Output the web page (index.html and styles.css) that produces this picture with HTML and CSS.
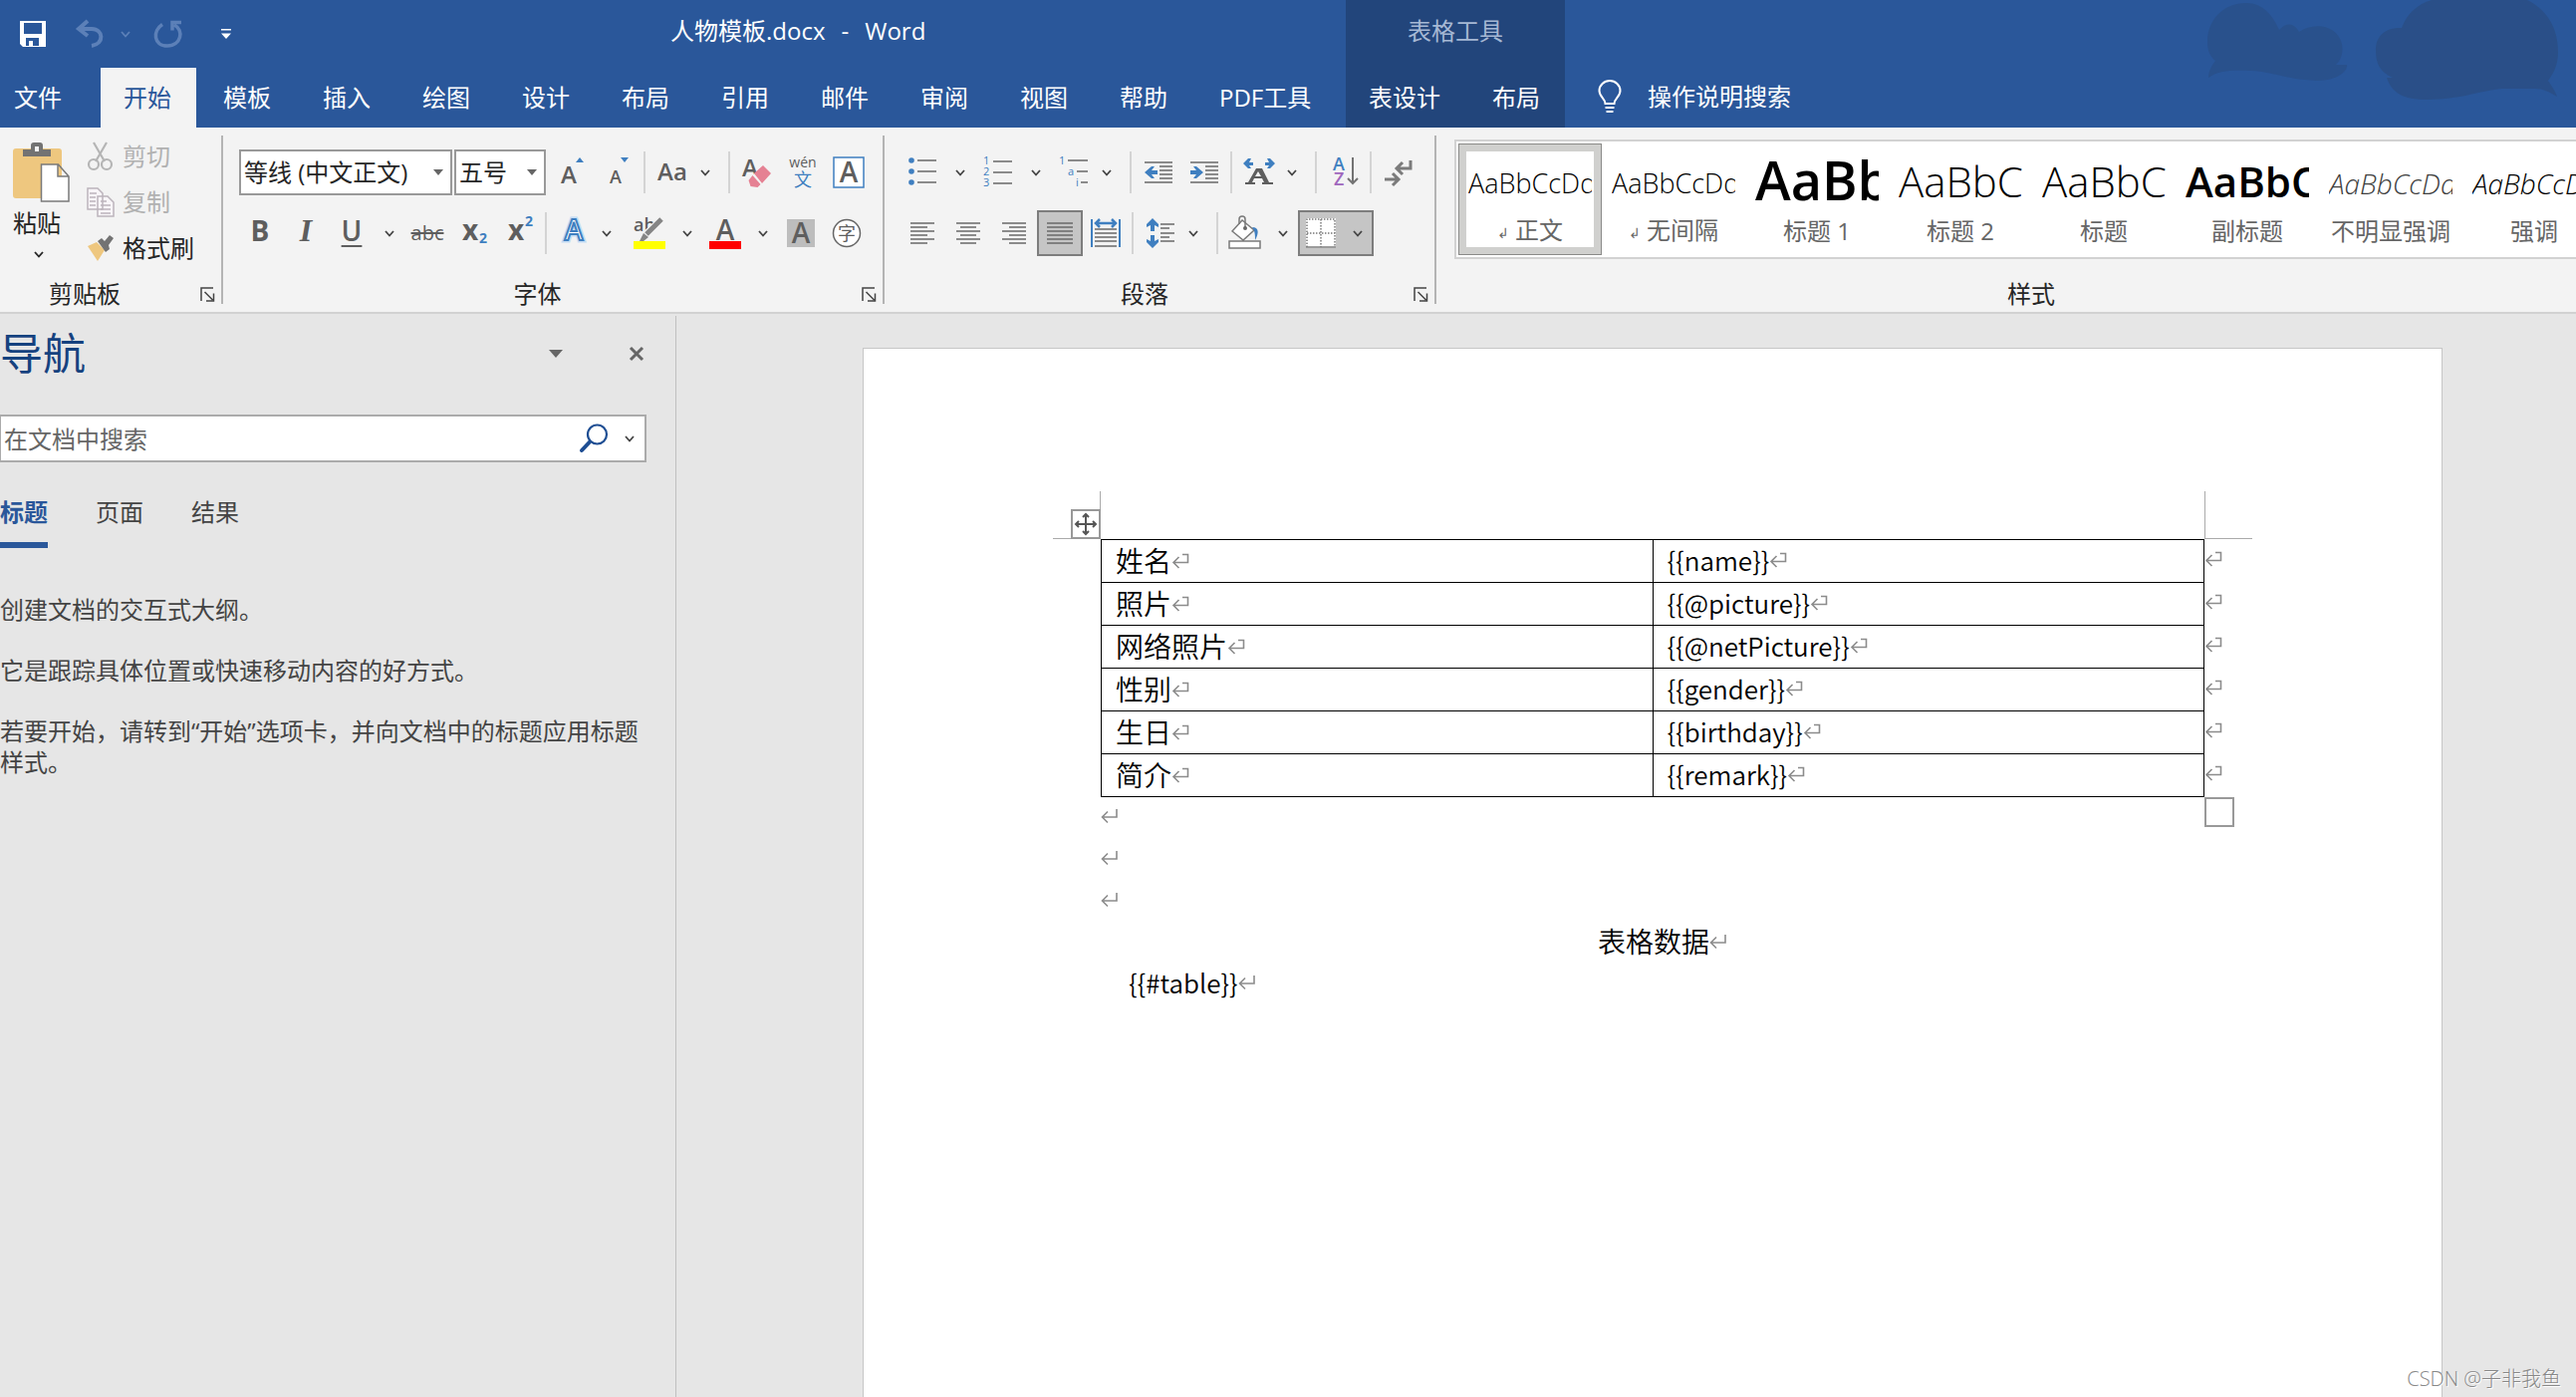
FILE: index.html
```html
<!DOCTYPE html>
<html lang="zh-CN">
<head>
<meta charset="utf-8">
<title>人物模板.docx - Word</title>
<link rel="stylesheet" href="styles.css">
</head>
<body>
<svg class="defs" aria-hidden="true">
  <symbol id="chev" viewBox="0 0 10 7"><path d="M1 1l4 4.500 4-4.500" fill="none" stroke="currentColor" stroke-width="1.800"/></symbol>
  <symbol id="tri" viewBox="0 0 10 6"><path d="M0 0h10l-5 6z" fill="currentColor"/></symbol>
  <symbol id="ret" viewBox="0 0 18 16"><path d="M11 1.500h5.500V9.500H2M7.500 4L2 9.500 7.500 15" fill="none" stroke="#8c8c8c" stroke-width="1.600"/></symbol>
  <symbol id="para" viewBox="0 0 18 16"><path d="M16 1v8H2M7 3.500L1.500 9 7 14.500" fill="none" stroke="#8c8c8c" stroke-width="1.600"/></symbol>
  <symbol id="launch" viewBox="0 0 15 15"><path d="M1 14V1h12M4.500 5l8 8M13.500 6.500v7.500h-7.500" fill="none" stroke="#444" stroke-width="1.500"/></symbol>
</svg>

<header class="top">
  <svg class="deco" width="420" height="128" viewBox="0 0 420 128" aria-hidden="true">
    <g fill="#2a4f86">
      <path opacity=".7" d="M50 42C50 20 66 3 89 3c17 0 27 13 33 27 8-8 15-7 20 2 14-10 38-8 43 12 2 12-3 18-6 21l11 0c1 6-9 16-30 16-30-1-40-8-65-10-21-1-35 0-44 7 0-6 3-12 7-17-5-4-8-10-8-19z"/>
      <path opacity=".9" d="M219 50c0-14 10-23 26-22 5-14 16-24 30-28h96c20 10 31 28 31 52 0 14-5 22-10 29 3 4 8 12 9 16-8-5-14-8-22-8h-34c-30 4-38 10-74 11-25 0-36-7-41-22l6 0c-13-6-17-14-17-28z"/>
    </g>
  </svg>
  <div class="titlebar">
    <div class="qat">
      <button class="q" aria-label="保存"><svg width="26" height="26" viewBox="0 0 26 26"><path fill="#fff" fill-rule="evenodd" d="M0 0h26v26H3l-3-3zM4 2v11h18V2zM6 17v8h3v-5h4v5h6v-8z"/></svg></button>
      <button class="q dim wide" aria-label="撤消"><svg width="28" height="28" viewBox="0 0 28 28"><path fill="none" stroke="currentColor" stroke-width="4" d="M12 1L3 9l9 7M3 9h13c12 0 13 15 0 17"/></svg><svg width="10" height="7"><use href="#chev"/></svg></button>
      <button class="q dim redo" aria-label="恢复"><svg width="28" height="28" viewBox="0 0 28 28"><path fill="none" stroke="currentColor" stroke-width="3.500" d="M8 4.500C-2 11-1 26 13 26s17-16 7-21M27 2.500h-9v8"/></svg></button>
      <button class="q more" aria-label="自定义快速访问工具栏"><svg width="10" height="10" viewBox="0 0 10 10"><path fill="#fff" d="M0 0h10v1.500H0zM0 4.500h10L5 10z"/></svg></button>
    </div>
    <h1 class="doc-title"><span>人物模板.docx</span><span>-</span><span>Word</span></h1>
  </div>
  <nav class="tabs">
    <a class="tab file" href="#">文件</a>
    <a class="tab active" href="#">开始</a>
    <a class="tab" href="#">模板</a>
    <a class="tab" href="#">插入</a>
    <a class="tab" href="#">绘图</a>
    <a class="tab" href="#">设计</a>
    <a class="tab" href="#">布局</a>
    <a class="tab" href="#">引用</a>
    <a class="tab" href="#">邮件</a>
    <a class="tab" href="#">审阅</a>
    <a class="tab" href="#">视图</a>
    <a class="tab" href="#">帮助</a>
    <a class="tab pdf" href="#">PDF工具</a>
    <div class="context">
      <span class="context-name">表格工具</span>
      <a class="tab" href="#">表设计</a>
      <a class="tab" href="#">布局</a>
    </div>
    <a class="tell" href="#"><svg width="24" height="34" viewBox="0 0 24 34"><path fill="none" stroke="#fff" stroke-width="2" d="M7.500 24c0-5-6-7-6-13a10.500 10 0 0 1 21 0c0 6-6 8-6 13zM7.500 28h9"/><path fill="#fff" d="M8.500 31h7v2h-7z"/></svg>操作说明搜索</a>
  </nav>
</header>

<section class="ribbon">
  <div class="group clip">
    <div class="clip-body">
      <button class="paste">
        <svg width="58" height="62" viewBox="0 0 58 62"><rect y="7" width="49" height="50" rx="3" fill="#eec77f"/><path fill="#737373" d="M10 15V8h8V4q0-3 3-3h6q3 0 3 3v4h8v7z"/><path fill="#f3f3f3" d="M22 5h4v5h-4z"/><path fill="#fff" stroke="#7a7a7a" stroke-width="1.500" d="M28.500 23h17L56 35v25H28.500zM45 23v12h11"/></svg>
        <span>粘贴</span>
        <svg width="10" height="7"><use href="#chev"/></svg>
      </button>
      <div class="clip-list">
        <button class="off"><svg width="28" height="30" viewBox="0 0 28 30"><g fill="none" stroke="#b5b5b5" stroke-width="2.200"><path d="M7 1l11 19M20 1L9 20"/><circle cx="7" cy="23" r="5"/><circle cx="20" cy="23" r="5"/></g></svg>剪切</button>
        <button class="off"><svg width="28" height="30" viewBox="0 0 28 30"><path fill="#f8f5f8" stroke="#bcb4bc" stroke-width="1.500" d="M1 1h10l5 5v16H1zM11 9h10l6 6v14H11z"/><path stroke="#bcb4bc" stroke-width="1.300" d="M3 6h7M3 10h6M3 14h6M3 18h6M14 14h6M14 18h10M14 22h10M14 26h10"/></svg>复制</button>
        <button><svg width="28" height="26" viewBox="0 0 28 26"><path fill="#eec77f" d="M1 11l9-4 8 8-7 11z"/><path fill="#737373" d="M11 6l4-3 3 3 5-6 4 3-5 7 1 4-4 3z"/></svg>格式刷</button>
      </div>
    </div>
    <div class="foot"><span class="foot-name">剪贴板</span><button class="launch" aria-label="剪贴板设置"><svg width="15" height="15"><use href="#launch"/></svg></button></div>
  </div>

  <div class="group font">
    <div class="row">
      <span class="combo family"><select aria-label="字体"><option>等线 (中文正文)</option></select><svg width="10" height="6"><use href="#tri"/></svg></span>
      <span class="combo size"><select aria-label="字号"><option>五号</option></select><svg width="10" height="6"><use href="#tri"/></svg></span>
      <button class="tool" aria-label="增大字号"><svg width="26" height="32" viewBox="0 0 26 32"><text x="2" y="27" class="t24">A</text><path fill="#3f7fc0" d="M17 6l4-5 4 5z"/></svg></button>
      <button class="tool" aria-label="减小字号"><svg width="26" height="32" viewBox="0 0 26 32"><text x="5" y="27" class="t18">A</text><path fill="#3f7fc0" d="M16 1h8l-4 5z"/></svg></button>
      <i class="sep"></i>
      <button class="tool t-aa">Aa</button><button class="drop near" aria-label="更改大小写"><svg width="10" height="7"><use href="#chev"/></svg></button>
      <i class="sep"></i>
      <button class="tool" aria-label="清除格式"><svg width="30" height="32" viewBox="0 0 30 32"><text x="0" y="20" class="t24">A</text><path fill="#f3f3f3" d="M6 24L22 7l8 8-14 17z"/><path fill="#e58193" d="M12 17l9-8 8 8-9 10zM10.500 19l8 9-3 3-7-1-2-6z"/></svg></button>
      <button class="tool" aria-label="拼音指南"><svg width="32" height="34" viewBox="0 0 32 34"><text x="16" y="12" text-anchor="middle" class="t14">wén</text><text x="16" y="31" text-anchor="middle" class="t18 blue thin">文</text></svg></button>
      <button class="tool" aria-label="字符边框"><svg width="32" height="32" viewBox="0 0 32 32"><rect x="1" y="1" width="30" height="30" fill="#fff" stroke="#3f7fc0" stroke-width="1.500"/><text x="16" y="26" text-anchor="middle" class="t28">A</text></svg></button>
    </div>
    <div class="row">
      <button class="tool t-b">B</button>
      <button class="tool t-i">I</button>
      <button class="tool t-u">U</button><button class="drop" aria-label="下划线样式"><svg width="10" height="7"><use href="#chev"/></svg></button>
      <button class="tool t-s">abc</button>
      <button class="tool" aria-label="下标"><svg width="28" height="34" viewBox="0 0 28 34"><text x="3" y="24" class="t28 bold">x</text><text x="20" y="27" class="t14 bold blue">2</text></svg></button>
      <button class="tool" aria-label="上标"><svg width="28" height="34" viewBox="0 0 28 34"><text x="3" y="24" class="t28 bold">x</text><text x="20" y="10" class="t14 bold blue">2</text></svg></button>
      <i class="sep"></i>
      <button class="tool" aria-label="文本效果"><svg width="28" height="36" viewBox="0 0 28 36"><text x="14" y="25" text-anchor="middle" class="t28 halo">A</text><text x="14" y="25" text-anchor="middle" class="t28 glow" aria-hidden="true">A</text></svg></button><button class="drop near" aria-label="文本效果选项"><svg width="10" height="7"><use href="#chev"/></svg></button>
      <button class="tool" aria-label="突出显示"><svg width="34" height="34" viewBox="0 0 34 34"><text x="1" y="15" class="t18">ab</text><path stroke="#f3f3f3" stroke-width="8" d="M12 20L29 4"/><path stroke="#858585" stroke-width="5" d="M14 18L29 3"/><path fill="#858585" d="M11 17l5 4-5 4H7z"/><path fill="#ff0" d="M1 25h32v8H1z"/></svg></button><button class="drop" aria-label="突出显示颜色"><svg width="10" height="7"><use href="#chev"/></svg></button>
      <button class="tool" aria-label="字体颜色"><svg width="34" height="34" viewBox="0 0 34 34"><text x="17" y="24" text-anchor="middle" class="t28">A</text><path fill="red" d="M1 25h32v8H1z"/></svg></button><button class="drop" aria-label="字体颜色选项"><svg width="10" height="7"><use href="#chev"/></svg></button>
      <button class="tool" aria-label="字符底纹"><svg width="28" height="28" viewBox="0 0 28 28"><path fill="#bdbdbd" d="M0 0h28v28H0z"/><text x="14" y="24" text-anchor="middle" class="t28">A</text></svg></button>
      <button class="tool" aria-label="带圈字符"><svg width="30" height="30" viewBox="0 0 30 30"><circle cx="15" cy="15" r="13.500" fill="#fff" stroke="#666" stroke-width="1.500"/><text x="15" y="22" text-anchor="middle" class="t18 thin">字</text></svg></button>
    </div>
    <div class="foot"><span class="foot-name">字体</span><button class="launch" aria-label="字体设置"><svg width="15" height="15"><use href="#launch"/></svg></button></div>
  </div>

  <div class="group paragraph">
    <div class="row">
      <button class="tool" aria-label="项目符号"><svg width="30" height="30" viewBox="0 0 30 30"><g fill="#3f7fc0"><circle cx="4" cy="3" r="2.800"/><circle cx="4" cy="14" r="2.800"/><circle cx="4" cy="25" r="2.800"/></g><path class="ln" d="M10 3h19M10 14h19M10 25h19"/></svg></button><button class="drop" aria-label="项目符号库"><svg width="10" height="7"><use href="#chev"/></svg></button>
      <button class="tool" aria-label="编号"><svg width="30" height="34" viewBox="0 0 30 34"><text x="0" y="9" class="t11 blue">1</text><text x="0" y="20" class="t11 blue">2</text><text x="0" y="31" class="t11 blue">3</text><path class="ln" d="M10 6h19M10 17h19M10 28h19"/></svg></button><button class="drop" aria-label="编号库"><svg width="10" height="7"><use href="#chev"/></svg></button>
      <button class="tool" aria-label="多级列表"><svg width="30" height="34" viewBox="0 0 30 34"><text x="0" y="9" class="t11 blue">1</text><text x="9" y="20" class="t11 blue">a</text><text x="17" y="31" class="t11 blue">i</text><path class="ln" d="M9 5h20M18 16h11M22 27h7"/></svg></button><button class="drop near" aria-label="多级列表库"><svg width="10" height="7"><use href="#chev"/></svg></button>
      <i class="sep"></i>
      <button class="tool" aria-label="减少缩进量"><svg width="30" height="22" viewBox="0 0 30 22"><path class="ln" d="M1 1h28M16 5h13M16 9h13M16 13h13M16 17h13M1 21h28"/><path fill="#3f7fc0" d="M1 11l7-6h3l-3 4h6v4H8l3 4H8z"/></svg></button>
      <button class="tool" aria-label="增加缩进量"><svg width="30" height="22" viewBox="0 0 30 22"><path class="ln" d="M1 1h28M16 5h13M16 9h13M16 13h13M16 17h13M1 21h28"/><path fill="#3f7fc0" d="M14 11L7 5H4l3 4H1v4h6l-3 4h3z"/></svg></button>
      <i class="sep"></i>
      <button class="tool" aria-label="中文版式"><svg width="32" height="28" viewBox="0 0 32 28"><path fill="#3f7fc0" d="M0 5l5-5h3L6 4h4v3H6l2 3H5zM32 5l-5-5h-3l2 4h-4v3h4l-2 3h3z"/><path fill="#5e5e5e" fill-rule="evenodd" d="M13 10h6l7 14h4v2H19v-2h2l-2-4h-8l-2 4h3v2H2v-2h3zM15 13l-3 5h6z"/></svg></button><button class="drop near" aria-label="中文版式选项"><svg width="10" height="7"><use href="#chev"/></svg></button>
      <i class="sep"></i>
      <button class="tool" aria-label="排序"><svg width="26" height="34" viewBox="0 0 26 34"><text x="2" y="15" class="t18 blue">A</text><text x="3" y="30" class="t18 purple">Z</text><path fill="none" stroke="#737373" stroke-width="2" d="M22 2v26M17 23l5 5 5-5"/></svg></button>
      <i class="sep"></i>
      <button class="tool" aria-label="显示编辑标记"><svg width="30" height="28" viewBox="0 0 30 28"><path fill="none" stroke="#7b7b7b" stroke-width="3" d="M27 2v8H14M19 4l-6 6 6 6M1 21h13M9 15l6 6-6 6"/></svg></button>
    </div>
    <div class="row">
      <button class="tool" aria-label="左对齐"><svg width="26" height="24" viewBox="0 0 26 24"><path class="ln" d="M1 2h24M1 6h17M1 10h24M1 14h17M1 18h24M1 22h17"/></svg></button>
      <button class="tool" aria-label="居中"><svg width="26" height="24" viewBox="0 0 26 24"><path class="ln" d="M1 2h24M5 6h16M1 10h24M5 14h16M1 18h24M5 22h16"/></svg></button>
      <button class="tool" aria-label="右对齐"><svg width="26" height="24" viewBox="0 0 26 24"><path class="ln" d="M1 2h24M8 6h17M1 10h24M8 14h17M1 18h24M8 22h17"/></svg></button>
      <button class="tool on" aria-label="两端对齐"><svg width="26" height="24" viewBox="0 0 26 24"><path class="ln" d="M0 2h26M0 6h26M0 10h26M0 14h26M0 18h26M0 22h26"/></svg></button>
      <button class="tool" aria-label="分散对齐"><svg width="30" height="30" viewBox="0 0 30 30"><path class="ln" d="M4 11h22M4 15h22M4 19h22M4 23h22M4 28h22"/><path fill="none" stroke="#3f7fc0" stroke-width="2" d="M1 1v28M29 1v28"/><path fill="none" stroke="#3f7fc0" stroke-width="2.500" d="M5 5h20M9 1L5 5l4 4M21 1l4 4-4 4"/></svg></button>
      <i class="sep"></i>
      <button class="tool" aria-label="行距"><svg width="30" height="30" viewBox="0 0 30 30"><path fill="#3f7fc0" d="M7 0l6 6v3L9 7v6H5V7L1 9V6zM7 30l6-6v-3l-4 2v-6H5v6l-4-2v3z"/><path class="ln" d="M15 6h14M15 10h9M15 15h14M15 19h9M15 23h14"/></svg></button><button class="drop near" aria-label="行距选项"><svg width="10" height="7"><use href="#chev"/></svg></button>
      <i class="sep"></i>
      <button class="tool" aria-label="底纹"><svg width="34" height="34" viewBox="0 0 34 34"><path fill="#fff" stroke="#7a7a7a" stroke-width="1.500" d="M1 25h31v7H1zM4 15L14 4l12 10-11 10z"/><path fill="none" stroke="#7a7a7a" stroke-width="1.500" d="M11 8V3c0-4 6-4 6 0v9"/><circle cx="17" cy="12" r="2" fill="#666"/><path fill="#3f7fc0" d="M24 11c7 0 7 6 3 13 0-5 0-9-3-13z"/></svg></button><button class="drop" aria-label="底纹颜色"><svg width="10" height="7"><use href="#chev"/></svg></button>
      <button class="border-btn on" aria-label="边框"><svg width="30" height="30" viewBox="0 0 30 30"><path fill="#fff" d="M0 0h30v30H0z"/><path fill="none" stroke="#7a7a7a" stroke-width="1.500" stroke-dasharray="1.500 1.500" d="M1 29V1h28v28M15 1v28M1 15h28"/><path stroke="#7a7a7a" stroke-width="1.500" d="M0 29h30"/></svg><svg width="10" height="7"><use href="#chev"/></svg></button>
    </div>
    <div class="foot"><span class="foot-name">段落</span><button class="launch" aria-label="段落设置"><svg width="15" height="15"><use href="#launch"/></svg></button></div>
  </div>

  <div class="group styles">
    <div class="gallery">
      <button class="style picked"><span class="sample">AaBbCcDd</span><span class="name"><small>↲</small>正文</span></button>
      <button class="style"><span class="sample">AaBbCcDd</span><span class="name"><small>↲</small>无间隔</span></button>
      <button class="style"><span class="sample s-h1">AaBb</span><span class="name">标题 1</span></button>
      <button class="style"><span class="sample s-h2">AaBbC</span><span class="name">标题 2</span></button>
      <button class="style"><span class="sample s-h2">AaBbC</span><span class="name">标题</span></button>
      <button class="style"><span class="sample s-sub">AaBbC</span><span class="name">副标题</span></button>
      <button class="style"><span class="sample s-em soft">AaBbCcDd</span><span class="name">不明显强调</span></button>
      <button class="style"><span class="sample s-em">AaBbCcDd</span><span class="name">强调</span></button>
    </div>
    <div class="foot"><span class="foot-name">样式</span></div>
  </div>
</section>

<div class="work">
  <aside class="pane">
    <div class="pane-head">
      <h2>导航</h2>
      <button class="pane-menu" aria-label="任务窗格选项"><svg width="14" height="8" viewBox="0 0 14 8"><path fill="currentColor" d="M0 0h14L7 8z"/></svg></button>
      <button class="pane-close" aria-label="关闭"><svg width="14" height="14" viewBox="0 0 14 14"><path stroke="#666" stroke-width="3" d="M1 1l12 12M13 1L1 13"/></svg></button>
    </div>
    <div class="search">
      <input type="text" placeholder="在文档中搜索" aria-label="在文档中搜索">
      <button aria-label="搜索"><svg width="30" height="30" viewBox="0 0 30 30"><circle cx="18.500" cy="11" r="9.500" fill="none" stroke="#1e4e93" stroke-width="2.200"/><path stroke="#1e4e93" stroke-width="4" stroke-linecap="round" d="M11 18.500L3 27"/></svg></button>
      <button aria-label="搜索选项"><svg width="10" height="7"><use href="#chev"/></svg></button>
    </div>
    <nav class="pane-tabs">
      <a class="current" href="#">标题</a>
      <a href="#">页面</a>
      <a href="#">结果</a>
    </nav>
    <p>创建文档的交互式大纲。</p>
    <p>它是跟踪具体位置或快速移动内容的好方式。</p>
    <p>若要开始，请转到“开始”选项卡，并向文档中的标题应用标题样式。</p>
  </aside>

  <main class="canvas">
    <article class="page">
      <div class="table-wrap">
        <i class="corner left"></i><i class="corner right"></i>
        <svg class="handle" width="30" height="30" viewBox="0 0 30 30"><rect x="1" y="1" width="28" height="28" fill="#fff" stroke="#999" stroke-width="2"/><path fill="none" stroke="#555" stroke-width="2" d="M15 5v20M5 15h20M12 8l3-3 3 3M12 22l3 3 3-3M8 12l-3 3 3 3M22 12l3 3-3 3"/></svg>
        <i class="resize"></i>
        <div class="row-ends">
          <svg width="18" height="16"><use href="#ret"/></svg><svg width="18" height="16"><use href="#ret"/></svg><svg width="18" height="16"><use href="#ret"/></svg><svg width="18" height="16"><use href="#ret"/></svg><svg width="18" height="16"><use href="#ret"/></svg><svg width="18" height="16"><use href="#ret"/></svg>
        </div>
        <table>
          <tr><td>姓名<svg width="18" height="16"><use href="#ret"/></svg></td><td class="field">{{name}}<svg width="18" height="16"><use href="#ret"/></svg></td></tr>
          <tr><td>照片<svg width="18" height="16"><use href="#ret"/></svg></td><td class="field">{{@picture}}<svg width="18" height="16"><use href="#ret"/></svg></td></tr>
          <tr><td>网络照片<svg width="18" height="16"><use href="#ret"/></svg></td><td class="field">{{@netPicture}}<svg width="18" height="16"><use href="#ret"/></svg></td></tr>
          <tr><td>性别<svg width="18" height="16"><use href="#ret"/></svg></td><td class="field">{{gender}}<svg width="18" height="16"><use href="#ret"/></svg></td></tr>
          <tr><td>生日<svg width="18" height="16"><use href="#ret"/></svg></td><td class="field">{{birthday}}<svg width="18" height="16"><use href="#ret"/></svg></td></tr>
          <tr><td>简介<svg width="18" height="16"><use href="#ret"/></svg></td><td class="field">{{remark}}<svg width="18" height="16"><use href="#ret"/></svg></td></tr>
        </table>
      </div>
      <p><svg width="18" height="16"><use href="#para"/></svg></p>
      <p><svg width="18" height="16"><use href="#para"/></svg></p>
      <p><svg width="18" height="16"><use href="#para"/></svg></p>
      <p class="mid">表格数据<svg width="18" height="16"><use href="#para"/></svg></p>
      <p class="indent field">{{#table}}<svg width="18" height="16"><use href="#para"/></svg></p>
    </article>
    <span class="credit">CSDN @子非我鱼</span>
  </main>
</div>
</body>
</html>
```
FILE: styles.css
```css
* { box-sizing: border-box; }
html, body { height: 100%; }
body {
  margin: 0;
  display: flex;
  flex-direction: column;
  overflow: hidden;
  font: 24px/32px "Open Sans", "Noto Sans CJK SC", sans-serif;
  color: #262626;
  background: #e6e6e6;
}
button {
  border: 0;
  padding: 0;
  background: none;
  font: inherit;
  color: inherit;
  flex: none;
}
a { color: inherit; text-decoration: none; }
svg { flex: none; overflow: visible; }
.defs { position: absolute; width: 0; height: 0; }

/* title bar and tabs */
.top { position: relative; background: #2a579a; color: #fff; flex: none; }
.deco { position: absolute; right: 0; top: 0; }
.titlebar { display: flex; height: 68px; align-items: center; }
.qat { display: flex; align-items: center; width: 673px; padding-left: 20px; color: #fff; }
.q { display: flex; align-items: center; }
.dim { color: #5c80b8; }
.wide { margin-left: 30px; gap: 17px; }
.redo { margin-left: 24px; }
.more { margin-left: 39px; }
.doc-title { display: flex; gap: 16px; margin: 0; font-size: 24px; font-weight: 400; padding-bottom: 6px; white-space: nowrap; }
.tabs { display: flex; gap: 4px; height: 60px; white-space: nowrap; }
.tab { display: flex; align-items: center; padding: 0 25px 0 23px; height: 60px; }
.tabs .file { padding: 0 35px 0 14px; }
.tabs .active { background: #f3f3f3; color: #2a579a; }
.tabs .pdf { width: 146px; }
.context {
  position: relative;
  display: flex;
  gap: 4px;
  margin-top: -68px;
  padding-top: 68px;
  background: #22457b;
}
.context-name { position: absolute; top: 15px; left: 0; right: 0; text-align: center; color: #a6b8d4; }
.tell { display: flex; align-items: center; gap: 26px; padding: 0 0 2px 29px; }

/* ribbon */
.ribbon {
  display: flex;
  flex: none;
  height: 187px;
  background: #f3f3f3;
  border-bottom: 2px solid #d2d2d2;
  overflow: hidden;
}
.group { position: relative; display: flex; flex-direction: column; flex: none; padding: 22px 0 0; }
.group::after {
  content: "";
  position: absolute;
  right: 0;
  top: 8px;
  width: 2px;
  height: 169px;
  background: #b4b4b4;
}
.foot { display: flex; align-items: center; margin: auto 0 0 -24px; height: 36px; }
.foot-name { flex: 1; text-align: center; }
.launch { display: flex; margin-right: 8px; }
.row { display: flex; align-items: center; height: 46px; margin-bottom: 15px; }
.tool { display: flex; align-items: center; justify-content: center; width: 46px; height: 46px; color: #5e5e5e; }
.drop { display: flex; align-items: center; justify-content: center; width: 30px; height: 46px; color: #444; }
.near { justify-content: flex-start; padding-left: 5px; }
.on { background: #c5c5c5; border: 2px solid #7d7d7d; }
.sep { width: 2px; height: 42px; margin: 0 4px 0 3px; background: #d4d4d4; flex: none; }
.ln { stroke: #6a6a6a; stroke-width: 1.5; fill: none; }

.clip { width: 224px; padding-top: 14px; }
.clip-body { display: flex; gap: 16px; padding-left: 13px; }
.paste { display: flex; flex-direction: column; align-items: flex-start; width: 58px; gap: 2px; }
.paste span { line-height: 36px; }
.paste svg:last-child { margin: 8px 0 0 21px; }
.clip-list { margin-top: -8px; }
.clip-list button { display: flex; align-items: center; gap: 8px; height: 46px; }
.clip-list .off { color: #b1b1b1; }
.clip .foot { margin-left: 49px; }
.clip .foot-name { text-align: left; }

.font { width: 664px; padding-left: 14px; }
.combo { position: relative; display: flex; align-items: center; height: 46px; margin-left: 2px; flex: none; color: #666; }
.combo select {
  appearance: none;
  width: 100%;
  height: 46px;
  border: 2px solid #999;
  background: #fff;
  padding: 0 3px;
  font: inherit;
  color: #262626;
}
.combo svg { position: absolute; right: 9px; }
.family { width: 214px; }
.size { width: 92px; margin-right: 3px; }
text { fill: #5e5e5e; font-weight: 600; }
.t11 { font-size: 11px; font-weight: 400; }
.t14 { font-size: 14px; font-weight: 400; }
.t18 { font-size: 18px; }
.t24 { font-size: 24px; }
.t28 { font-size: 28px; }
.thin { font-weight: 400; }
.bold { font-weight: 700; }
.blue { fill: #3f7fc0; }
.purple { fill: #a066bd; }
.halo { stroke: #c4dcf3; stroke-width: 5; }
.glow { fill: #fff; stroke: #3f7fc0; stroke-width: 2; }
.t-aa { font-weight: 600; padding-bottom: 2px; }
.t-b, .t-i, .t-u { padding-bottom: 7px; }
.t-b { font-size: 28px; font-weight: 700; }
.t-i { font: italic 700 32px/32px "Liberation Serif", serif; }
.t-u { font-size: 28px; font-weight: 600; text-decoration: underline; text-decoration-thickness: 2px; text-underline-offset: 4px; }
.t-s { font-size: 20px; text-decoration: line-through; text-decoration-thickness: 2px; }

.paragraph { width: 554px; padding-left: 15px; }
.border-btn { display: flex; align-items: center; width: 76px; height: 46px; padding-left: 6px; gap: 17px; color: #444; }

.styles { width: 1194px; padding: 12px 0 0 18px; }
.styles::after { display: none; }
.styles .foot { margin-left: -18px; }
.gallery { display: flex; height: 120px; border: 2px solid #d2d2d2; border-right: 0; background: #fff; padding: 2px; }
.style {
  display: flex;
  flex-direction: column;
  align-items: center;
  width: 144px;
  height: 112px;
  padding-top: 9px;
  border: 1px solid transparent;
}
.picked { background: linear-gradient(#fff, #fff) center / 128px 96px no-repeat #d0d0ce; border-color: #8a8a88; }
.sample {
  width: 124px;
  height: 60px;
  overflow: hidden;
  color: #000;
  font: 300 27px/60px "Open Sans", sans-serif;
  text-align: left;
  white-space: nowrap;
}
.s-h1 { font-size: 54px; font-weight: 600; line-height: 52px; }
.s-h2 { font-size: 42px; line-height: 56px; }
.s-sub { font-size: 42px; font-weight: 600; line-height: 56px; }
.s-em { font-size: 28px; font-style: italic; }
.soft { color: #404040; }
.name { display: flex; gap: 6px; line-height: 36px; color: #666; white-space: pre; }
.name small { font-size: 14px; line-height: 42px; }

/* work area */
.work { display: flex; flex: 1; min-height: 0; padding-top: 2px; }
.pane { width: 679px; flex: none; border-right: 1px solid #c0c0c0; color: #444; }
.pane-head { display: flex; align-items: center; height: 76px; padding-right: 32px; color: #666; }
.pane-head h2 { flex: 1; margin: 0; font-size: 43px; line-height: 76px; font-weight: 400; color: #16427f; }
.pane-menu { display: flex; margin-right: 67px; }
.pane-close { display: flex; }
.search {
  display: flex;
  align-items: center;
  gap: 16px;
  height: 48px;
  margin: 23px 29px 0 0;
  padding-right: 10px;
  border: 2px solid #ababab;
  border-left-width: 1px;
  background: #fff;
}
.search input { flex: 1; min-width: 0; height: 44px; border: 0; padding: 0 3px; font: inherit; background: none; }
.search input::placeholder { color: #666; opacity: 1; }
.search button { display: flex; }
.pane-tabs { display: flex; gap: 48px; margin: 34px 0 46px; }
.pane-tabs a { height: 52px; }
.pane-tabs .current { font-weight: 700; color: #2a579a; border-bottom: 6px solid #2a579a; }
.pane p { margin: 0 29px 30px 0; line-height: 31px; }

.canvas { flex: 1; display: flex; min-width: 0; padding: 32px 134px 0 187px; }
.page {
  flex: 1;
  min-width: 0;
  padding: 191px 238px 0;
  background: #fff;
  border: 1px solid #c6c6c6;
  border-bottom: 0;
  color: #000;
  font: 350 28px/42px "Noto Sans CJK SC", sans-serif;
}
.page p { margin: 0; height: 42px; line-height: 36px; }
.page p svg, td svg { vertical-align: 3px; }
.page .field { font-size: 26px; }
.page .indent { padding-left: 28px; }
.page .mid { padding-left: 20px; text-align: center; }
.table-wrap { position: relative; }
table { width: 100%; border-collapse: collapse; table-layout: fixed; }
td { height: 43px; padding: 0 14px 2px; border: 1px solid #000; line-height: 38px; }
.corner { position: absolute; top: -48px; width: 48px; height: 48px; border-bottom: 1px solid #aaa; }
.left { right: 100%; border-right: 1px solid #aaa; }
.right { left: 100%; border-left: 1px solid #aaa; }
.handle { position: absolute; right: 100%; top: -30px; }
.resize { position: absolute; left: 100%; top: 100%; width: 30px; height: 30px; border: 2px solid #999; background: #fff; }
.row-ends { position: absolute; left: 100%; top: 12px; display: flex; flex-direction: column; gap: 27px; }
.credit {
  position: absolute;
  right: 15px;
  bottom: 3px;
  font: 300 20px/30px "Open Sans", "Noto Sans CJK SC", sans-serif;
  color: #888;
  text-shadow: 1px 1px 0 #fff;
}
```
